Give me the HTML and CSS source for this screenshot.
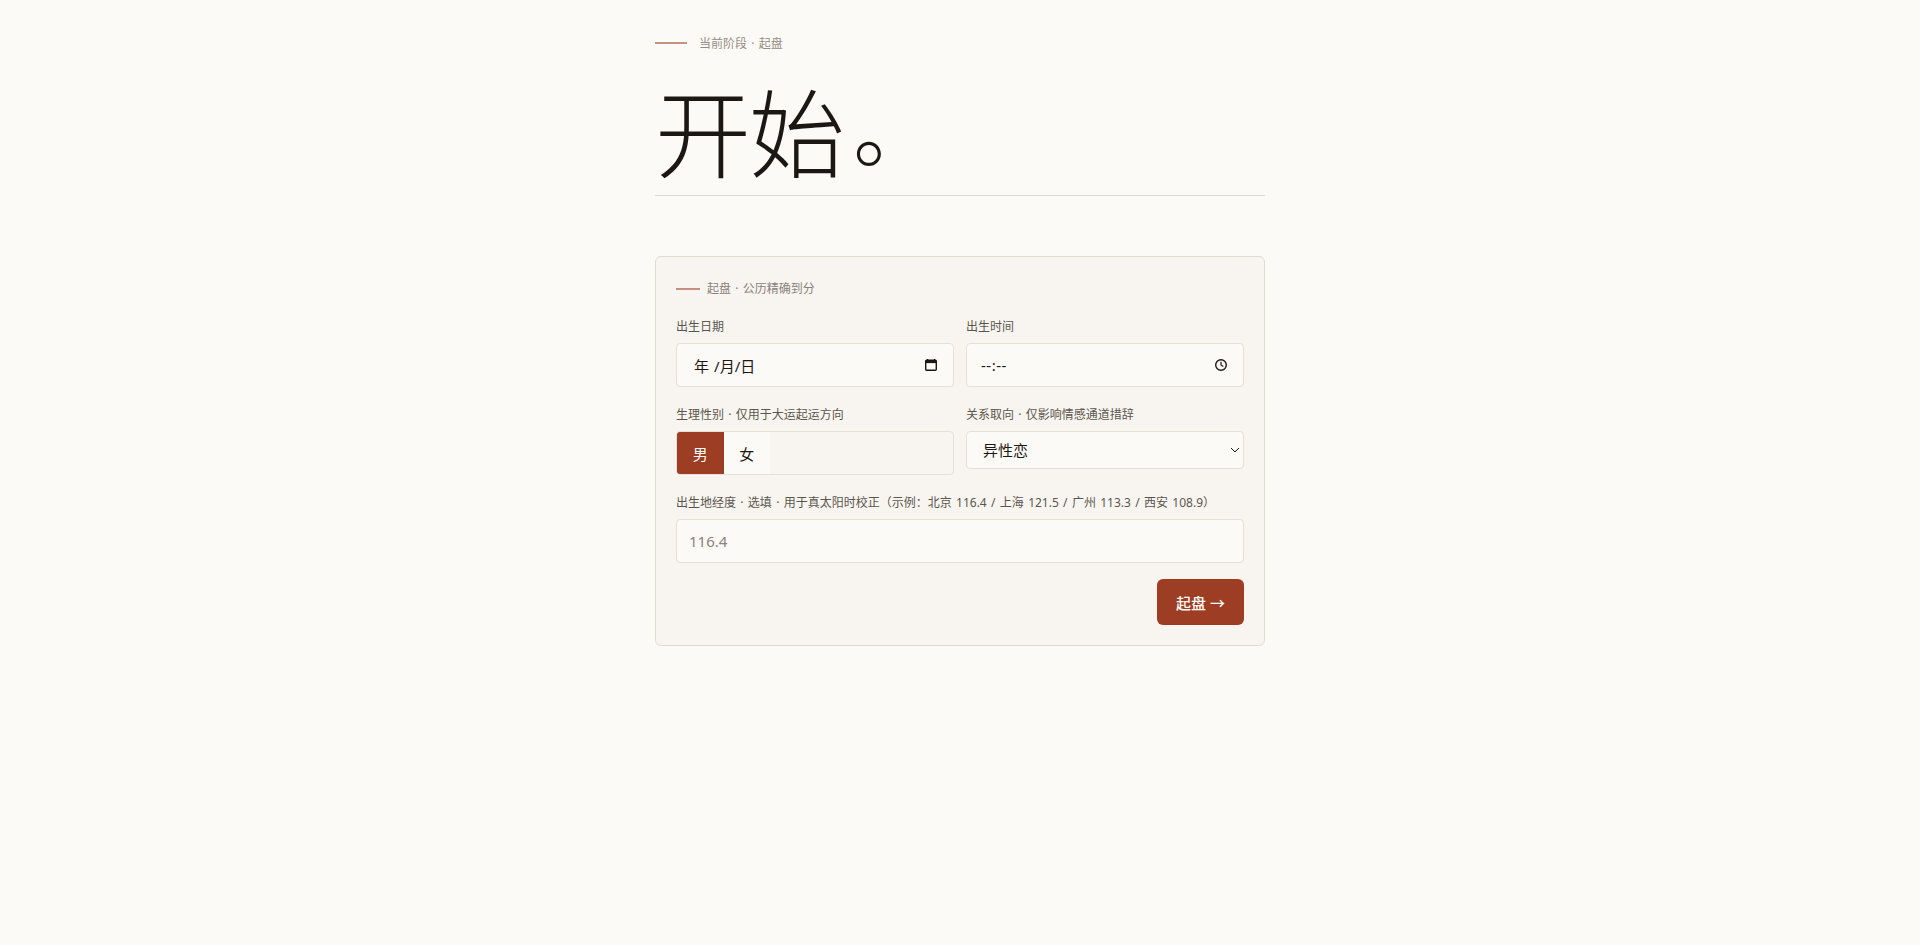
FILE: index.html
```html
<!DOCTYPE html>
<html lang="zh-CN">
<head>
  <meta charset="UTF-8" />
  <meta name="viewport" content="width=device-width, initial-scale=1.0" />
  <title>起盘</title>
  <link rel="stylesheet" href="styles.css">
</head>
<body>
  <main class="page">
    <header class="hero">
      <div class="eyebrow"><span class="eyebrow-line"></span>当前阶段 · 起盘</div>
      <h1>开始<span class="stop">。</span></h1>
    </header>

    <form class="card">
      <div class="card-title"><span class="card-line"></span>起盘 · 公历精确到分</div>

      <div class="row">
        <div class="field">
          <label>出生日期</label>
          <div class="input picker date-picker">
            <span>年 /月/日</span>
            <svg class="picker-icon" width="14" height="14" viewBox="0 0 14 14">
              <path d="M3.5 1v1.5M10.5 1v1.5" fill="none" stroke="#1c1712" stroke-width="1.4" />
              <rect x="1.7" y="2.3" width="10.6" height="10" rx="1" fill="none" stroke="#1c1712" stroke-width="1.4" />
              <rect x="1.7" y="2.3" width="10.6" height="2.8" fill="#1c1712" />
            </svg>
          </div>
        </div>
        <div class="field">
          <label>出生时间</label>
          <div class="input picker time-picker">
            <span>--:--</span>
            <svg class="picker-icon" width="14" height="14" viewBox="0 0 14 14">
              <circle cx="7" cy="7" r="5.3" fill="none" stroke="#1c1712" stroke-width="1.4" />
              <path d="M7 3.8V7l2.3 1.4" fill="none" stroke="#1c1712" stroke-width="1.2" />
            </svg>
          </div>
        </div>
      </div>

      <div class="row">
        <div class="field">
          <label>生理性别 · 仅用于大运起运方向</label>
          <div class="toggle">
            <button type="button" class="toggle-btn active">男</button>
            <button type="button" class="toggle-btn">女</button>
          </div>
        </div>
        <div class="field">
          <label for="orientation">关系取向 · 仅影响情感通道措辞</label>
          <select id="orientation" class="input">
            <option>异性恋</option>
            <option>同性恋</option>
            <option>双性恋</option>
          </select>
        </div>
      </div>

      <div class="field">
        <label for="longitude">出生地经度 · 选填 · 用于真太阳时校正（示例：北京 116.4 / 上海 121.5 / 广州 113.3 / 西安 108.9）</label>
        <input type="text" id="longitude" class="input" placeholder="116.4" />
      </div>

      <div class="actions">
        <button type="submit" class="submit">起盘 →</button>
      </div>
    </form>
  </main>
</body>
</html>
```

FILE: styles.css
```css
* {
  box-sizing: border-box;
}
body {
  margin: 0;
  background-color: #fcfaf7;
  color: #1c1712;
  font-family: "Noto Sans", "Noto Sans CJK SC", sans-serif;
  word-spacing: 1.2px;
}
.page {
  width: 610px;
  margin: 0 auto;
  padding-top: 33px;
}
.hero {
  border-bottom: 1px solid #ddd8d0;
  margin-bottom: 60px;
}
.eyebrow {
  display: flex;
  align-items: center;
  gap: 12px;
  font-size: 12px;
  line-height: 22px;
  color: #958d84;
}
.eyebrow-line {
  width: 32px;
  height: 2px;
  margin-bottom: 2px;
  background-color: #9c3d24;
  opacity: 0.55;
}
h1 {
  margin: 19px 0 0;
  padding-bottom: 11px;
  font-family: "Noto Sans CJK SC", sans-serif;
  font-size: 96px;
  font-weight: 300;
  line-height: 110px;
  letter-spacing: -0.02em;
}
.stop {
  display: inline-block;
  transform: translate(3px, -3px) scale(0.85);
}
.card {
  display: flex;
  flex-direction: column;
  padding: 20px;
  background-color: #f8f5f1;
  border: 1px solid #e0dbd3;
  border-radius: 6px;
}
.card-title {
  display: flex;
  align-items: center;
  gap: 7px;
  margin-top: 2px;
  margin-bottom: 18px;
  font-size: 12px;
  line-height: 20px;
  color: #8a8279;
}
.card-line {
  width: 24px;
  height: 2px;
  background-color: #9c3d24;
  opacity: 0.55;
}
.row {
  display: grid;
  grid-template-columns: 1fr 1fr;
  gap: 12px;
  margin-bottom: 18px;
}
.field {
  display: flex;
  flex-direction: column;
  gap: 6px;
}
label {
  font-size: 12px;
  line-height: 20px;
  color: #5c554d;
}
.input {
  width: 100%;
  height: 44px;
  padding: 0 12px;
  font-family: inherit;
  font-size: 15px;
  color: #1c1712;
  background-color: #fcfaf7;
  border: 1px solid #e5e0d8;
  border-radius: 4px;
}
.input::placeholder {
  color: #8a8279;
}
.picker {
  display: flex;
  align-items: center;
  justify-content: space-between;
}
.date-picker {
  padding-left: 17px;
}
.time-picker {
  padding-left: 14px;
  letter-spacing: 0.5px;
}
.picker-icon {
  margin-right: 3px;
}
select.input {
  height: 38px;
  padding-left: 16px;
  appearance: none;
  background-image: url("data:image/svg+xml,%3Csvg xmlns='http://www.w3.org/2000/svg' width='10' height='6'%3E%3Cpath d='M1 1l4 4 4-4' fill='none' stroke='%231c1712' stroke-width='1'/%3E%3C/svg%3E");
  background-repeat: no-repeat;
  background-position: right 3px center;
}
.toggle {
  display: flex;
  height: 44px;
  border: 1px solid #e5e0d8;
  border-radius: 4px;
  background-color: #f8f5f1;
}
.toggle-btn {
  width: 46.5px;
  padding: 0;
  border: none;
  font-family: inherit;
  font-size: 15px;
  color: #1c1712;
  background-color: #fcfaf7;
  cursor: pointer;
}
.toggle-btn.active {
  color: #fcfaf7;
  background-color: #9c3d24;
  border-radius: 3px 0 0 3px;
}
.actions {
  display: flex;
  justify-content: flex-end;
  margin-top: 16px;
}
.submit {
  width: 87px;
  height: 46px;
  border: none;
  border-radius: 6px;
  font-family: inherit;
  font-size: 15px;
  font-weight: 500;
  color: #fcfaf7;
  background-color: #9c3d24;
  cursor: pointer;
}
```
